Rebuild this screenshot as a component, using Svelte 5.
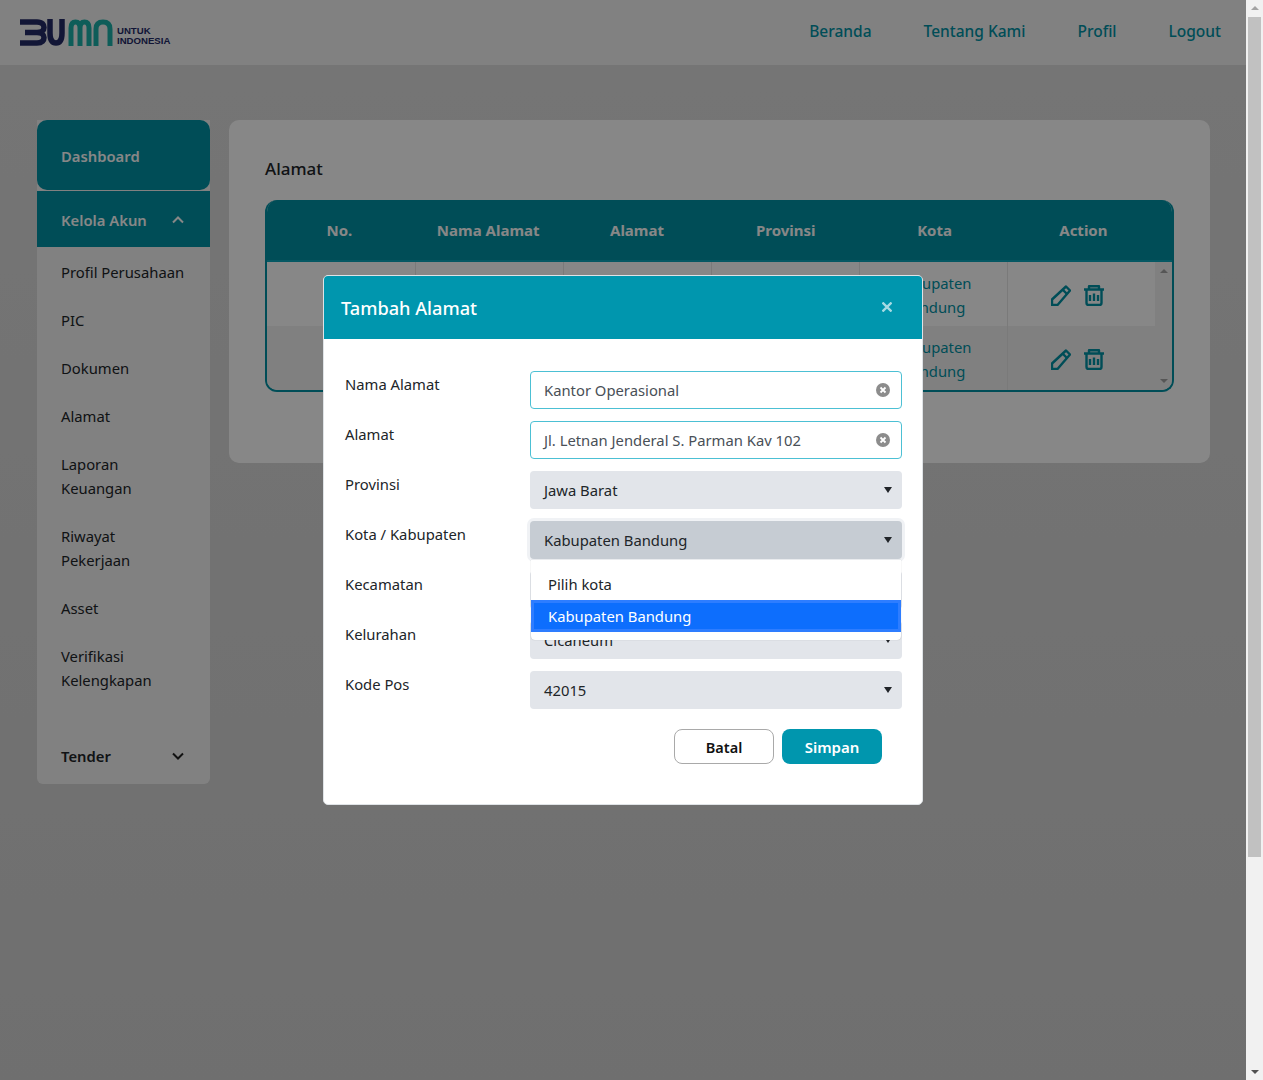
<script lang="ts">
  const sideItems = [
    'Profil Perusahaan',
    'PIC',
    'Dokumen',
    'Alamat',
    'Laporan Keuangan',
    'Riwayat Pekerjaan',
    'Asset',
    'Verifikasi Kelengkapan'
  ];
  const navLinks = ['Beranda', 'Tentang Kami', 'Profil', 'Logout'];
  const columns = ['No.', 'Nama Alamat', 'Alamat', 'Provinsi', 'Kota', 'Action'];
  const rows = [
    { no: '1', nama: 'Kantor Pusat', alamat: 'Jl. Asia Afrika', prov: 'Jawa Barat', kota: 'Kabupaten Bandung' },
    { no: '2', nama: 'Kantor Cabang', alamat: 'Jl. Merdeka', prov: 'Jawa Barat', kota: 'Kabupaten Bandung' }
  ];
</script>

<div class="page">
  <header class="navbar">
    <div class="logo">
      <svg width="94" height="27" viewBox="0 0 94 27" fill="none" stroke-width="5.500">
        <path d="M0 3H17C22.500 3 24 6 24 8.500C24 11 22 13.500 17 13.500H5M17 13.500C22 13.500 24 16 24 18.500C24 21 22.500 24 17 24H0" stroke="#232a66" />
        <path d="M30 0V14C30 21 32 24 36 24C40 24 42 21 42 14V0" stroke="#232a66" />
        <g stroke="#1cb0a8" stroke-width="5">
          <path d="M51 27V9C51 4.500 53 3 55.500 3C58 3 60 4.500 60 9V27M60 9C60 4.500 62 3 64.500 3C67 3 69 4.500 69 9V27" />
          <path d="M76 27V10C76 5 79 3 83 3C87 3 90 5 90 10V27" />
        </g>
      </svg>
      <div class="logo-text"><span>UNTUK</span><span>INDONESIA</span></div>
    </div>
    <nav class="nav-links">
      {#each navLinks as link}
        <a href="#top">{link}</a>
      {/each}
    </nav>
  </header>

  <div class="content">
    <aside class="sidebar">
      <div class="side-dash">Dashboard</div>
      <div class="side-head">
        <span>Kelola Akun</span>
        <svg width="12" height="8" viewBox="0 0 12 8" fill="none" stroke="#fff" stroke-width="2"><path d="M1 6.500L6 1.500L11 6.500" /></svg>
      </div>
      <ul class="side-list">
        {#each sideItems as item}
          <li>{item}</li>
        {/each}
      </ul>
      <div class="side-tender">
        <span>Tender</span>
        <svg width="12" height="8" viewBox="0 0 12 8" fill="none" stroke="#222" stroke-width="2"><path d="M1 1.500L6 6.500L11 1.500" /></svg>
      </div>
    </aside>

    <main class="card">
      <h2>Alamat</h2>
      <div class="table-wrap">
        <div class="thead">
          {#each columns as col}
            <div>{col}</div>
          {/each}
        </div>
        <div class="tbody">
          <div class="rows">
            {#each rows as row}
              <div class="row">
                <div>{row.no}</div>
                <div>{row.nama}</div>
                <div>{row.alamat}</div>
                <div>{row.prov}</div>
                <div>{row.kota}</div>
                <div class="actions">
                  <svg width="20" height="21" viewBox="0 0 20 21" fill="none" stroke="#0092a5" stroke-width="2.400" stroke-linejoin="round">
                    <path d="M1 14.500L15 1.500L19 5.500L6.500 20H1Z" />
                    <path d="M11.500 4.500L16 9" />
                  </svg>
                  <svg width="20" height="21" viewBox="0 0 20 21" fill="none" stroke="#0092a5" stroke-width="2.400" stroke-linejoin="round">
                    <path d="M0 4.500H20M5 4.500V1.200H15V4.500M2.500 4.500V18C2.500 19.200 3.300 20 4.500 20H15.500C16.700 20 17.500 19.200 17.500 18V4.500" />
                    <path d="M6 10V16M10 8.500V16M14 10V16" />
                  </svg>
                </div>
              </div>
            {/each}
          </div>
          <div class="table-scroll">
            <i class="up"></i>
            <i class="down"></i>
          </div>
        </div>
      </div>
    </main>
  </div>
</div>

<div class="backdrop"></div>

<div class="modal">
  <div class="modal-head">
    <h3>Tambah Alamat</h3>
    <svg class="close" width="10" height="10" viewBox="0 0 10 10" stroke="#fff" stroke-opacity="0.65" stroke-width="2.300"><path d="M0.500 0.500L9.500 9.500M9.500 0.500L0.500 9.500" /></svg>
  </div>
  <div class="modal-body">
    <div class="field">
      <label for="nama">Nama Alamat</label>
      <div class="input">
        <span id="nama">Kantor Operasional</span>
        <svg class="clear" width="14" height="14" viewBox="0 0 14 14"><circle cx="7" cy="7" r="7" fill="#8c8c8c" /><path d="M4.500 4.500L9.500 9.500M9.500 4.500L4.500 9.500" stroke="#fff" stroke-width="1.800" /></svg>
      </div>
    </div>
    <div class="field">
      <label for="alamat">Alamat</label>
      <div class="input">
        <span id="alamat">Jl. Letnan Jenderal S. Parman Kav 102</span>
        <svg class="clear" width="14" height="14" viewBox="0 0 14 14"><circle cx="7" cy="7" r="7" fill="#8c8c8c" /><path d="M4.500 4.500L9.500 9.500M9.500 4.500L4.500 9.500" stroke="#fff" stroke-width="1.800" /></svg>
      </div>
    </div>
    <div class="field">
      <label for="prov">Provinsi</label>
      <div class="select"><span id="prov">Jawa Barat</span><i class="caret"></i></div>
    </div>
    <div class="field">
      <label for="kota">Kota / Kabupaten</label>
      <div class="select open">
        <span id="kota">Kabupaten Bandung</span><i class="caret"></i>
        <div class="dropdown">
          <div class="option">Pilih kota</div>
          <div class="option active"><span>Kabupaten Bandung</span></div>
        </div>
      </div>
    </div>
    <div class="field">
      <label for="kec">Kecamatan</label>
      <div class="select"><span id="kec">Cimahi</span><i class="caret"></i></div>
    </div>
    <div class="field">
      <label for="kel">Kelurahan</label>
      <div class="select"><span id="kel">Cicaheum</span><i class="caret"></i></div>
    </div>
    <div class="field">
      <label for="pos">Kode Pos</label>
      <div class="select"><span id="pos">42015</span><i class="caret"></i></div>
    </div>
    <div class="modal-actions">
      <button class="btn-cancel">Batal</button>
      <button class="btn-save">Simpan</button>
    </div>
  </div>
</div>

<div class="scrollbar">
  <i class="arrow-up"></i>
  <div class="thumb"></div>
  <i class="arrow-down"></i>
</div>

<style>
  :global(body) {
    margin: 0;
    overflow: hidden;
    font-family: 'Noto Sans', 'Open Sans', sans-serif;
    font-size: 14.800px;
    line-height: 24px;
    color: #212529;
  }

  .page {
    width: 1246px;
    height: 1080px;
    background: linear-gradient(#dedede, #d2d2d2);
  }

  .navbar {
    height: 65px;
    background: #f4f4f4;
    display: flex;
    align-items: center;
    justify-content: space-between;
    padding: 0 25px 4px 20px;
    box-sizing: border-box;
  }

  .logo {
    display: flex;
    align-items: flex-end;
    gap: 3px;
    height: 27px;
    margin-top: 4px;
  }

  .logo-text {
    display: flex;
    flex-direction: column;
    font-family: 'Liberation Sans', sans-serif;
    font-size: 9.600px;
    font-weight: 700;
    line-height: 10px;
    color: #232a66;
  }

  .nav-links {
    display: flex;
    gap: 52px;
  }

  .nav-links a {
    color: #0092a5;
    text-decoration: none;
    font-size: 15.500px;
    font-weight: 500;
  }

  .content {
    display: flex;
    align-items: flex-start;
    gap: 19px;
    padding: 55px 0 0 37px;
  }

  .sidebar {
    width: 173px;
    background: #f4f4f4;
    border-radius: 0 0 6px 6px;
    height: 664px;
    flex: none;
  }

  .side-dash {
    height: 70px;
    box-sizing: border-box;
    display: flex;
    align-items: center;
    padding: 2px 0 0 24px;
    background: #0092a5;
    color: #fff;
    font-weight: 600;
    border-radius: 10px;
  }

  .side-head {
    height: 56px;
    margin-top: 1px;
    box-sizing: border-box;
    display: flex;
    align-items: center;
    justify-content: space-between;
    padding: 2px 26px 0 24px;
    background: #0092a5;
    color: #fff;
    font-weight: 600;
  }

  .side-list {
    list-style: none;
    margin: 0;
    padding: 1px 0 0;
  }

  .side-list li {
    padding: 12px 24px;
  }

  .side-tender {
    display: flex;
    align-items: center;
    justify-content: space-between;
    padding: 0 26px 0 24px;
    margin-top: 40px;
    font-weight: 600;
  }

  .card {
    width: 981px;
    height: 343px;
    box-sizing: border-box;
    padding: 37px 36px;
    background: #fff;
    border-radius: 10px;
  }

  .card h2 {
    margin: 0 0 19px;
    font-size: 17px;
    line-height: 24px;
    font-weight: 500;
  }

  .table-wrap {
    width: 909px;
    border-radius: 12px;
    overflow: hidden;
    border: solid #0092a5;
    border-width: 0 2px 2px;
    box-sizing: border-box;
  }

  .thead {
    display: grid;
    grid-template-columns: repeat(6, 148.800px);
    margin-left: -2px;
    height: 60px;
    align-items: center;
    background: #0092a5;
    color: #fff;
    font-weight: 700;
    font-size: 15px;
    text-align: center;
  }

  .tbody {
    display: flex;
    border-top: 2px solid #0aa6bc;
  }

  .rows {
    width: 888px;
  }

  .row {
    display: grid;
    grid-template-columns: repeat(6, 148px);
    height: 64px;
    background: #fff;
    color: #0092a5;
    text-align: center;
  }

  .row:nth-child(2) {
    background: #f2f2f2;
  }

  .row > div {
    display: flex;
    align-items: center;
    justify-content: center;
    box-sizing: border-box;
    padding: 1px 24px 0;
    border-left: 1px solid #e6e6e6;
  }

  .row > div:first-child {
    border-left: 0;
  }

  .row > .actions {
    gap: 13px;
    padding: 3px 9px 0 0;
  }

  .table-scroll {
    width: 17px;
    background: #f1f1f1;
    position: relative;
  }

  .table-scroll i {
    position: absolute;
    left: 5px;
    border: 4px solid transparent;
  }

  .table-scroll .up {
    top: 3px;
    border-bottom-color: #a3a3a3;
  }

  .table-scroll .down {
    bottom: 3px;
    border-top-color: #a3a3a3;
  }

  .backdrop {
    position: fixed;
    left: 0;
    top: 0;
    width: 1246px;
    height: 1080px;
    background: rgba(0, 0, 0, 0.47);
  }

  .modal {
    position: fixed;
    left: 323px;
    top: 275px;
    width: 600px;
    height: 530px;
    box-sizing: border-box;
    background: #fff;
    border-radius: 5px;
    border: 1px solid #dfe3e6;
  }

  .modal-head {
    height: 63px;
    background: #0096ae;
    border-radius: 4px 4px 0 0;
    display: flex;
    align-items: center;
    justify-content: space-between;
    padding: 0 30px 0 17px;
    color: #fff;
  }

  .modal-head h3 {
    margin: 0;
    font-size: 18.200px;
    line-height: 30px;
    font-weight: 500;
  }

  .close {
    margin-top: -2px;
  }

  .modal-body {
    padding: 32px 20px 0 21px;
  }

  .field {
    display: flex;
    align-items: flex-start;
    margin-bottom: 12px;
  }

  .field label {
    width: 185px;
    flex: none;
    line-height: 26px;
  }

  .input,
  .select {
    width: 372px;
    height: 38px;
    box-sizing: border-box;
    border-radius: 4px;
    display: flex;
    align-items: center;
    justify-content: space-between;
    padding: 0 12px 0 14px;
    position: relative;
  }

  .input {
    border: 1px solid #4cc0d4;
    padding-left: 13px;
    color: #495057;
  }

  .select {
    background: #e2e5ea;
    color: #212529;
  }

  .select.open {
    background: #c6ccd3;
    box-shadow: 0 0 0 3px #f0f2f5;
  }

  .clear {
    margin-right: -1px;
  }

  .caret {
    width: 0;
    height: 0;
    border: 4px solid transparent;
    border-top: 6px solid #212529;
    border-bottom: 0;
    margin: -1px -1.500px 0 0;
  }

  .dropdown {
    position: absolute;
    z-index: 2;
    left: 1px;
    right: 1px;
    top: 39px;
    height: 80px;
    box-sizing: border-box;
    padding-top: 8px;
    background: #fff;
    border-radius: 0 0 4px 4px;
    box-shadow: 0 0 1px rgba(0, 0, 0, 0.3);
  }

  .option {
    height: 32px;
    line-height: 32px;
    padding-left: 17px;
  }

  .option.active {
    background: #2e7dff;
    padding: 3px;
    box-sizing: border-box;
    color: #fff;
    line-height: 26px;
  }

  .option.active span {
    display: block;
    background: #0d6efd;
    padding-left: 14px;
    height: 26px;
  }

  .modal-actions {
    display: flex;
    justify-content: flex-end;
    gap: 8px;
    margin-top: 20px;
    padding-right: 20px;
  }

  .modal-actions button {
    width: 100px;
    height: 35px;
    border-radius: 8px;
    font: 600 15px/20px 'Noto Sans', 'Open Sans', sans-serif;
    box-sizing: border-box;
  }

  .modal-actions .btn-cancel {
    background: #fff;
    border: 1px solid #a9a9a9;
    color: #111;
    font-size: 14.500px;
  }

  .btn-save {
    background: #0096ae;
    border: 0;
    color: #fff;
  }

  .scrollbar {
    position: fixed;
    right: 0;
    top: 0;
    width: 17px;
    height: 1080px;
    background: #f1f1f1;
  }

  .scrollbar .thumb {
    position: absolute;
    left: 2px;
    width: 13px;
    top: 17px;
    height: 840px;
    background: #c1c1c1;
  }

  .scrollbar i {
    position: absolute;
    left: 5px;
    border: 4px solid transparent;
  }

  .arrow-up {
    top: 2px;
    border-bottom-color: #a3a3a3 !important;
  }

  .arrow-down {
    bottom: 2px;
    border-top-color: #505050 !important;
  }
</style>
